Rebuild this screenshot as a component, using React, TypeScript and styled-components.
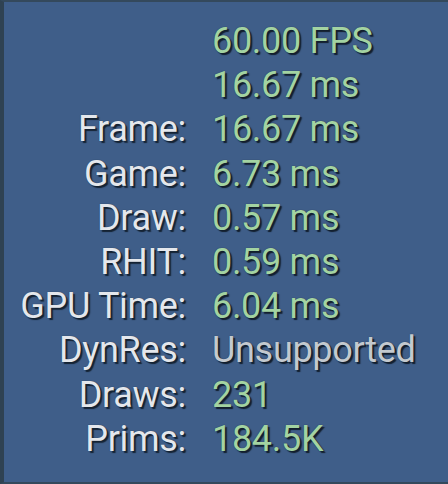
import React from "react";
import styled, { createGlobalStyle } from "styled-components";

const Global = createGlobalStyle`
  html, body { margin: 0; padding: 0; background: #3f5e89; }
  #root { width: 448px; height: 484px; }
`;

const Panel = styled.div`
  box-sizing: border-box;
  width: 448px;
  height: 484px;
  background: #3f5e89;
  border-left: 4px solid #2f4252;
  border-top: 2px solid #34495c;
  border-bottom: 2px solid #34495c;
  padding: 17px 0 0 0;
  font-family: Roboto, "Liberation Sans", sans-serif;
  font-size: 36px;
  letter-spacing: -0.3px;
`;

const Grid = styled.div`
  display: grid;
  grid-template-columns: 182px auto;
  column-gap: 26px;
  grid-auto-rows: 44.2px;
  align-items: center;
`;

const Label = styled.div`
  text-align: right;
  color: #e4e7ec;
  text-shadow: 2px 2px 1px rgba(10, 20, 30, 0.8), 0 0 1px rgba(10, 20, 30, 0.6);
  white-space: nowrap;
`;

const Value = styled.div<{ $tone?: "green" | "gray" }>`
  color: ${(p) => (p.$tone === "gray" ? "#c3c9cf" : "#a3d3a2")};
  text-shadow: 2px 2px 1px rgba(10, 20, 30, 0.85), 0 0 1px rgba(10, 20, 30, 0.6);
  white-space: nowrap;
`;

const rows: [string, string, "green" | "gray"][] = [
  ["", "60.00 FPS", "green"],
  ["", "16.67 ms", "green"],
  ["Frame:", "16.67 ms", "green"],
  ["Game:", "6.73 ms", "green"],
  ["Draw:", "0.57 ms", "green"],
  ["RHIT:", "0.59 ms", "green"],
  ["GPU Time:", "6.04 ms", "green"],
  ["DynRes:", "Unsupported", "gray"],
  ["Draws:", "231", "green"],
  ["Prims:", "184.5K", "green"],
];

export default function App() {
  return (
    <>
      <Global />
      <Panel>
        <Grid>
          {rows.map(([l, v, t], i) => (
            <React.Fragment key={i}>
              <Label>{l}</Label>
              <Value $tone={t}>{v}</Value>
            </React.Fragment>
          ))}
        </Grid>
      </Panel>
    </>
  );
}
